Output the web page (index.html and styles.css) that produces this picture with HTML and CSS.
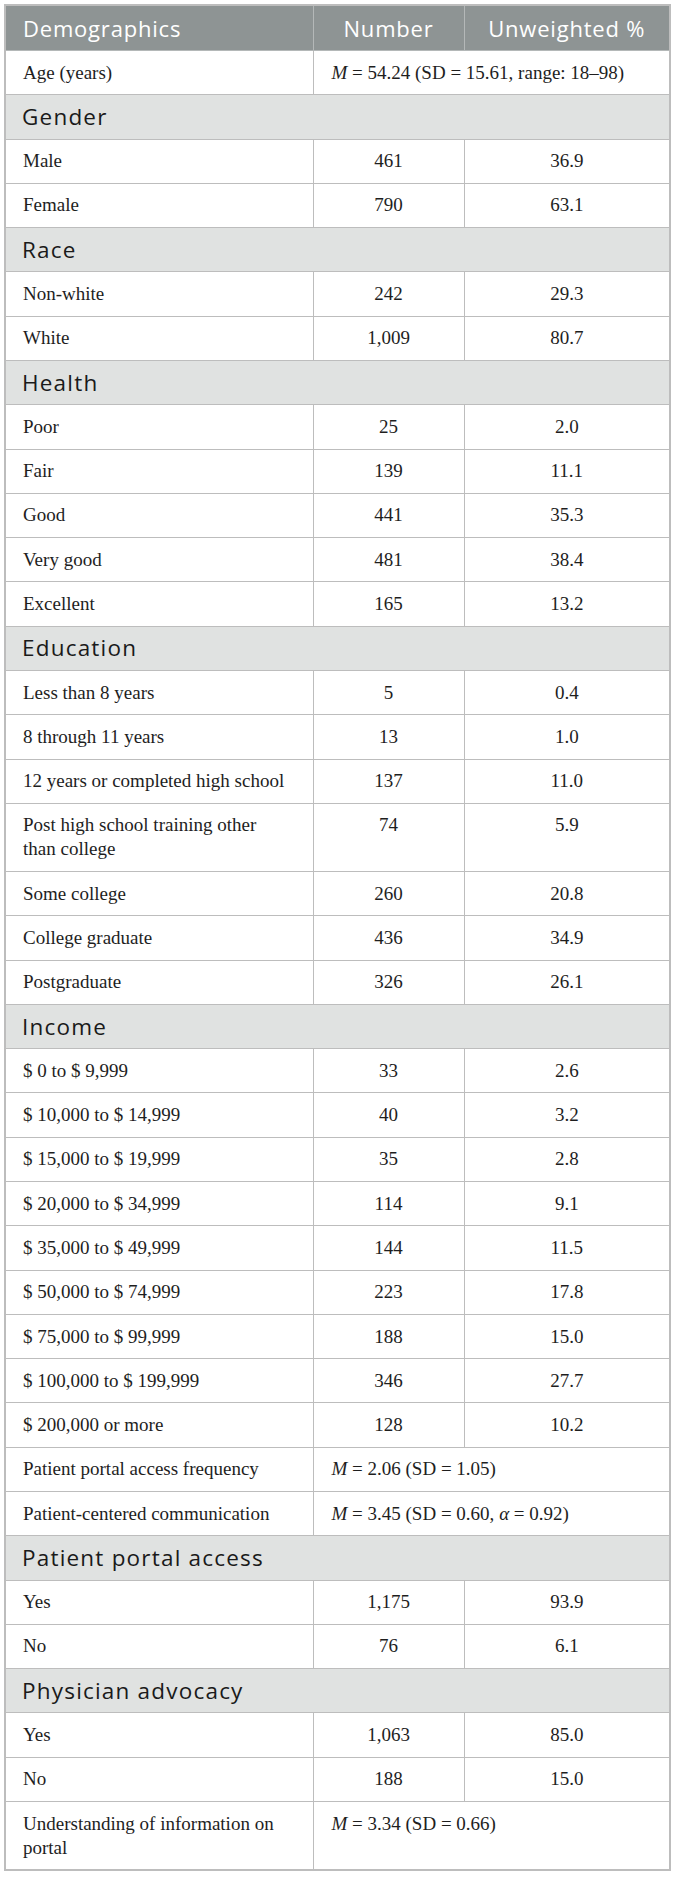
FILE: index.html
```html
<!DOCTYPE html>
<html lang="en">
<head>
<meta charset="utf-8">
<title>Demographics</title>
<link rel="stylesheet" href="styles.css">
</head>
<body>
<div class="wrap">
<table class="demo">
  <colgroup>
    <col class="c1"><col class="c2"><col class="c3">
  </colgroup>
  <thead>
    <tr><th class="lbl">Demographics</th><th>Number</th><th>Unweighted %</th></tr>
  </thead>
  <tbody>
    <tr><td>Age (years)</td><td colspan="2" class="span"><i>M</i> = 54.24 (SD = 15.61, range: 18–98)</td></tr>
    <tr class="sec"><td colspan="3">Gender</td></tr>
    <tr><td>Male</td><td class="n">461</td><td class="n">36.9</td></tr>
    <tr><td>Female</td><td class="n">790</td><td class="n">63.1</td></tr>
    <tr class="sec"><td colspan="3">Race</td></tr>
    <tr><td>Non-white</td><td class="n">242</td><td class="n">29.3</td></tr>
    <tr><td>White</td><td class="n">1,009</td><td class="n">80.7</td></tr>
    <tr class="sec"><td colspan="3">Health</td></tr>
    <tr><td>Poor</td><td class="n">25</td><td class="n">2.0</td></tr>
    <tr><td>Fair</td><td class="n">139</td><td class="n">11.1</td></tr>
    <tr><td>Good</td><td class="n">441</td><td class="n">35.3</td></tr>
    <tr><td>Very good</td><td class="n">481</td><td class="n">38.4</td></tr>
    <tr><td>Excellent</td><td class="n">165</td><td class="n">13.2</td></tr>
    <tr class="sec"><td colspan="3">Education</td></tr>
    <tr><td>Less than 8 years</td><td class="n">5</td><td class="n">0.4</td></tr>
    <tr><td>8 through 11 years</td><td class="n">13</td><td class="n">1.0</td></tr>
    <tr><td>12 years or completed high school</td><td class="n">137</td><td class="n">11.0</td></tr>
    <tr><td>Post high school training other than college</td><td class="n">74</td><td class="n">5.9</td></tr>
    <tr><td>Some college</td><td class="n">260</td><td class="n">20.8</td></tr>
    <tr><td>College graduate</td><td class="n">436</td><td class="n">34.9</td></tr>
    <tr><td>Postgraduate</td><td class="n">326</td><td class="n">26.1</td></tr>
    <tr class="sec"><td colspan="3">Income</td></tr>
    <tr><td>$ 0 to $ 9,999</td><td class="n">33</td><td class="n">2.6</td></tr>
    <tr><td>$ 10,000 to $ 14,999</td><td class="n">40</td><td class="n">3.2</td></tr>
    <tr><td>$ 15,000 to $ 19,999</td><td class="n">35</td><td class="n">2.8</td></tr>
    <tr><td>$ 20,000 to $ 34,999</td><td class="n">114</td><td class="n">9.1</td></tr>
    <tr><td>$ 35,000 to $ 49,999</td><td class="n">144</td><td class="n">11.5</td></tr>
    <tr><td>$ 50,000 to $ 74,999</td><td class="n">223</td><td class="n">17.8</td></tr>
    <tr><td>$ 75,000 to $ 99,999</td><td class="n">188</td><td class="n">15.0</td></tr>
    <tr><td>$ 100,000 to $ 199,999</td><td class="n">346</td><td class="n">27.7</td></tr>
    <tr><td>$ 200,000 or more</td><td class="n">128</td><td class="n">10.2</td></tr>
    <tr><td>Patient portal access frequency</td><td colspan="2" class="span"><i>M</i> = 2.06 (SD = 1.05)</td></tr>
    <tr><td>Patient-centered communication</td><td colspan="2" class="span"><i>M</i> = 3.45 (SD = 0.60, <i>α</i> = 0.92)</td></tr>
    <tr class="sec"><td colspan="3">Patient portal access</td></tr>
    <tr><td>Yes</td><td class="n">1,175</td><td class="n">93.9</td></tr>
    <tr><td>No</td><td class="n">76</td><td class="n">6.1</td></tr>
    <tr class="sec"><td colspan="3">Physician advocacy</td></tr>
    <tr><td>Yes</td><td class="n">1,063</td><td class="n">85.0</td></tr>
    <tr><td>No</td><td class="n">188</td><td class="n">15.0</td></tr>
    <tr><td>Understanding of information on portal</td><td colspan="2" class="span"><i>M</i> = 3.34 (SD = 0.66)</td></tr>
  </tbody>
</table>
</div>
</body>
</html>
```

FILE: styles.css
```css
html, body {
  margin: 0;
  padding: 0;
  background: #ffffff;
}

.wrap {
  padding: 4px 4px 4px 4px;
}

.demo {
  width: 665px;
  border-collapse: collapse;
  table-layout: fixed;
  border: 2px solid #bdbdbd;
  font-family: "Liberation Serif", "Times New Roman", serif;
  font-size: 19px;
  color: #1e1e1e;
}

.c1 { width: 308px; }
.c2 { width: 151px; }
.c3 { width: 206px; }

.demo th {
  background: #8e9494;
  color: #ffffff;
  font-family: "Open Sans", "Noto Sans", sans-serif;
  font-weight: 400;
  font-size: 22px;
  letter-spacing: 0.8px;
  line-height: 28px;
  padding: 8px 6px 8px 6px;
  text-align: center;
  border: 1px solid #b4b8b8;
  border-top: 2px solid #bdbdbd;
}

.demo th.lbl {
  text-align: left;
  padding-left: 17px;
}

.demo td {
  border: 1px solid #bdbdbd;
  padding: 9.65px 25px 9.65px 17px;
  line-height: 24px;
  vertical-align: top;
}

.demo td.n {
  text-align: center;
  padding-left: 8px;
  padding-right: 8px;
}

.demo td.span {
  padding-left: 18px;
}

.demo tr.sec td {
  background: #e0e2e1;
  font-family: "Open Sans", "Noto Sans", sans-serif;
  font-size: 22.5px;
  letter-spacing: 1.2px;
  color: #1a1a1a;
  padding-left: 16px;
}
```
